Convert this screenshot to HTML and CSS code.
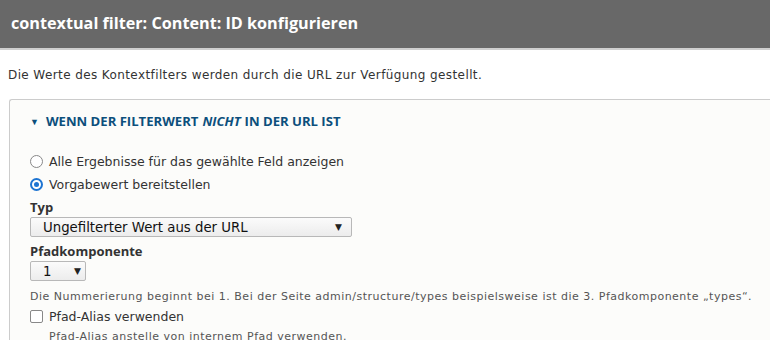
FILE: index.html
```html
<!DOCTYPE html>
<html lang="de">
<head>
<meta charset="utf-8">
<link rel="stylesheet" href="styles.css">
</head>
<body>
<header class="title-bar"><h1>contextual filter: Content: ID konfigurieren</h1></header>
<p class="intro">Die Werte des Kontextfilters werden durch die URL zur Verfügung gestellt.</p>
<section class="fieldset">
  <div class="legend"><span class="tri">&#9660;</span>WENN DER FILTERWERT <em>NICHT</em> IN DER URL IST</div>
  <div class="options">
    <label class="radio"><span class="rbox"></span>Alle Ergebnisse für das gewählte Feld anzeigen</label>
    <label class="radio"><span class="rbox on"></span>Vorgabewert bereitstellen</label>
  </div>
  <div class="field">
    <div class="flabel">Typ</div>
    <div class="select wide"><span>Ungefilterter Wert aus der URL</span><span class="arr">&#9660;</span></div>
  </div>
  <div class="field">
    <div class="flabel">Pfadkomponente</div>
    <div class="select small"><span>1</span><span class="arr">&#9660;</span></div>
    <div class="desc">Die Nummerierung beginnt bei 1. Bei der Seite admin/structure/types beispielsweise ist die 3. Pfadkomponente „types“.</div>
  </div>
  <label class="check"><span class="cbox"></span>Pfad-Alias verwenden</label>
  <div class="desc sub">Pfad-Alias anstelle von internem Pfad verwenden.</div>
</section>
</body>
</html>
```
FILE: styles.css
```css
html, body { margin: 0; padding: 0; background: #fff; }
body { font-family: "DejaVu Sans", Verdana, sans-serif; color: #333; width: 770px; height: 340px; overflow: hidden; }
.title-bar { background: #686868; height: 48px; border-bottom: 2px solid #cfcfcf; display: flex; align-items: center; padding-left: 11px; }
.title-bar h1 { margin: 0; color: #fff; font-family: "Open Sans", sans-serif; font-weight: 700; font-size: 16.2px; letter-spacing: 0; padding-bottom: 3px; }
.intro { margin: 17px 0 0 8px; font-size: 12px; letter-spacing: 0.4px; line-height: 16px; color: #333; }
.fieldset { margin: 16px 0 0 9px; border: 1px solid #ccc; border-right: none; border-radius: 3px 0 0 0; background: #fcfcfa; padding: 13px 0 0 20px; height: 300px; }
.legend { font-family: "Open Sans", sans-serif; font-weight: 700; font-size: 13.1px; color: #0c4f7c; display: flex; align-items: center; height: 16px; }
.legend em { font-style: italic; margin: 0 4px; }
.tri { font-size: 9px; margin-right: 7px; }
.options { margin-top: 24px; display: flex; flex-direction: column; gap: 6px; }
.radio, .check { display: flex; align-items: center; font-size: 12.5px; line-height: 17px; color: #333; }
.rbox { width: 11px; height: 11px; border: 1px solid #888; border-radius: 50%; margin-right: 6px; background: #fff; box-sizing: content-box; position: relative; }
.rbox.on { border: 2px solid #1d74d2; width: 9px; height: 9px; }
.rbox.on::after { content: ""; position: absolute; left: 2px; top: 2px; width: 5px; height: 5px; border-radius: 50%; background: #1d74d2; }
.field { margin-top: 6px; }
.flabel { font-family: "Open Sans", sans-serif; font-weight: 700; font-size: 13px; line-height: 17px; color: #333; }
.select { display: flex; align-items: center; justify-content: space-between; height: 18px; border: 1px solid #b8b8b8; border-radius: 2px; background: linear-gradient(#fbfbfb, #ececec); font-size: 13.3px; color: #111; box-sizing: content-box; }
.select.wide { width: 299px; padding: 0 9px 0 12px; margin-top: 1px; }
.select.small { width: 38px; padding: 0 4px 0 12px; margin-top: 1px; }
.arr { font-size: 9px; color: #222; }
.desc { font-size: 11px; letter-spacing: 0.5px; line-height: 14px; color: #555; margin-top: 9px; }
.check { margin-top: 4px; }
.cbox { width: 11px; height: 11px; border: 1px solid #888; border-radius: 2px; margin-right: 6px; background: #fff; }
.desc.sub { margin: 5px 0 0 19px; }
```
